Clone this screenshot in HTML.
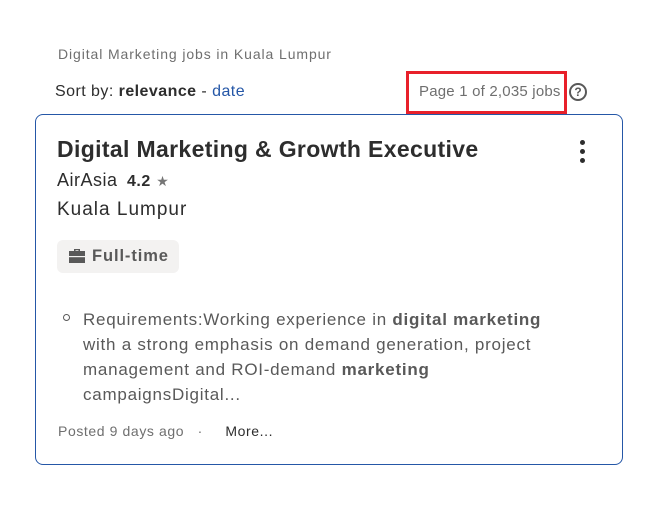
<!DOCTYPE html>
<html><head><meta charset="utf-8"><style>
*{margin:0;padding:0;box-sizing:border-box}
body{width:669px;height:521px;background:#fff;font-family:"Liberation Sans",sans-serif;position:relative;overflow:hidden;color:#2d2d2d}
.a{position:absolute;white-space:nowrap}
</style></head><body>
<div class="a" style="left:58px;top:46px;font-size:14px;color:#6f6f6f;letter-spacing:0.9px">Digital Marketing jobs in Kuala Lumpur</div>
<div class="a" style="left:55px;top:83px;font-size:16px;color:#2d2d2d;letter-spacing:0.45px">Sort by: <b>relevance</b> - <span style="color:#2557a7">date</span></div>
<div class="a" style="left:406px;top:71px;width:161px;height:43px;border:3px solid #e8202a"></div>
<div class="a" style="left:419px;top:83px;font-size:15px;color:#6f6f6f;letter-spacing:0.2px">Page 1 of 2,035 jobs</div>
<div class="a" style="left:569px;top:83px;width:18px;height:18px;border:2px solid #595959;border-radius:50%;font-size:12px;font-weight:bold;color:#595959;text-align:center;line-height:14px">?</div>
<div class="a" style="left:35px;top:114px;width:588px;height:351px;border:1px solid #2557a7;border-radius:8px"></div>
<div class="a" style="left:57px;top:136px;font-size:23px;font-weight:bold;color:#2d2d2d;letter-spacing:0.35px">Digital Marketing &amp; Growth Executive</div>
<div class="a" style="left:580px;top:140px;width:6px;height:24px">
<div style="width:5px;height:5px;border-radius:50%;background:#2d2d2d;margin-bottom:4px"></div>
<div style="width:5px;height:5px;border-radius:50%;background:#2d2d2d;margin-bottom:4px"></div>
<div style="width:5px;height:5px;border-radius:50%;background:#2d2d2d"></div></div>
<div class="a" style="left:57px;top:170px;font-size:18px;letter-spacing:0.5px">AirAsia <b style="font-size:16px;margin-left:4px">4.2</b> <span style="color:#767676;font-size:14px">★</span></div>
<div class="a" style="left:57px;top:199px;font-size:19px;letter-spacing:1px">Kuala Lumpur</div>
<div class="a" style="left:57px;top:240px;width:122px;height:33px;background:#f3f2f1;border-radius:6px"></div>
<svg class="a" style="left:67px;top:248px" width="20" height="17" viewBox="0 0 20 17"><path d="M7 1h6v2h5v12H2V3h5zM8.5 2.2v.8h3v-.8z" fill="#595959"/><rect x="2" y="8" width="16" height="1.2" fill="#f3f2f1"/></svg>
<div class="a" style="left:92px;top:247px;font-size:16.5px;font-weight:bold;color:#595959;letter-spacing:0.9px">Full-time</div>
<div class="a" style="left:63px;top:314px;width:7px;height:7px;border:1.3px solid #595959;border-radius:50%"></div>
<div class="a" style="left:83px;top:307px;font-size:17px;color:#595959;line-height:25px;letter-spacing:0.75px">Requirements:Working experience in <b>digital marketing</b><br>with a strong emphasis on demand generation, project<br>management and ROI-demand <b>marketing</b><br>campaignsDigital...</div>
<div class="a" style="left:58px;top:423px;font-size:14px;color:#6f6f6f;letter-spacing:0.6px">Posted 9 days ago &nbsp;&nbsp;·&nbsp;&nbsp;&nbsp;&nbsp; <span style="color:#2d2d2d">More...</span></div>
</body></html>
